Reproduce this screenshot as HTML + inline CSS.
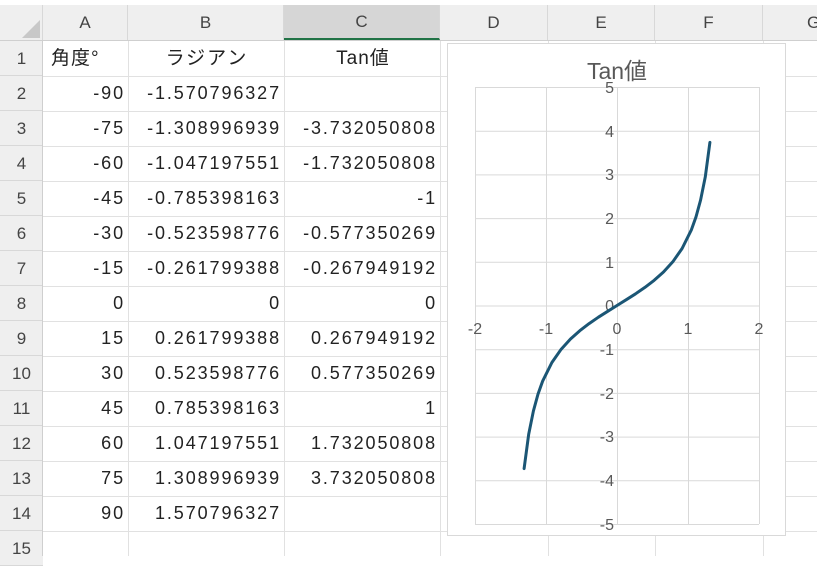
<!DOCTYPE html>
<html><head><meta charset="utf-8"><style>
body{margin:0;width:817px;height:556px;overflow:hidden;background:#fff;font-family:"Liberation Sans","Noto Sans CJK JP",sans-serif;position:relative}
.a{position:absolute}
.hd{position:absolute;top:5px;height:35px;background:#efefef;color:#444;font-size:17px;text-align:center;line-height:35px;border-right:1px solid #d8d8d8;box-sizing:border-box}
.rh{position:absolute;left:0;width:43px;background:#efefef;color:#444;font-size:17px;text-align:center;line-height:35px;height:35px;box-sizing:border-box;border-bottom:1px solid #d8d8d8}
.c{position:absolute;height:35px;line-height:35px;font-size:18px;color:#222;box-sizing:border-box;padding:0 3px 0 5px;white-space:nowrap;letter-spacing:1.9px}
</style></head><body>
<div class="hd" style="left:0;width:43px"></div>
<svg class="a" style="left:22px;top:20px" width="20" height="20"><polygon points="18,0 18,18 0,18" fill="#c8c8c8"/></svg>
<div class="hd" style="left:43px;width:85px">A</div>
<div class="hd" style="left:128px;width:156px">B</div>
<div class="hd" style="left:284px;width:156px;background:#d6d6d6;border-bottom:2px solid #217346;line-height:33px">C</div>
<div class="hd" style="left:440px;width:108px">D</div>
<div class="hd" style="left:548px;width:107px">E</div>
<div class="hd" style="left:655px;width:108px">F</div>
<div class="hd" style="left:763px;width:60px;text-align:left;padding-left:44px">G</div>
<div class="a" style="left:0;top:40px;width:817px;height:1px;background:#cfcfcf"></div>
<svg class="a" style="left:0;top:0" width="817" height="556">
<g stroke="#e1e1e1" stroke-width="1">
<line x1="43" y1="76.5" x2="817" y2="76.5"/><line x1="43" y1="111.5" x2="817" y2="111.5"/><line x1="43" y1="146.5" x2="817" y2="146.5"/><line x1="43" y1="181.5" x2="817" y2="181.5"/><line x1="43" y1="216.5" x2="817" y2="216.5"/><line x1="43" y1="251.5" x2="817" y2="251.5"/><line x1="43" y1="286.5" x2="817" y2="286.5"/><line x1="43" y1="321.5" x2="817" y2="321.5"/><line x1="43" y1="356.5" x2="817" y2="356.5"/><line x1="43" y1="391.5" x2="817" y2="391.5"/><line x1="43" y1="426.5" x2="817" y2="426.5"/><line x1="43" y1="461.5" x2="817" y2="461.5"/><line x1="43" y1="496.5" x2="817" y2="496.5"/><line x1="43" y1="531.5" x2="817" y2="531.5"/>
<line x1="128.5" y1="41" x2="128.5" y2="556"/><line x1="284.5" y1="41" x2="284.5" y2="556"/><line x1="440.5" y1="41" x2="440.5" y2="556"/><line x1="548.5" y1="41" x2="548.5" y2="556"/><line x1="655.5" y1="41" x2="655.5" y2="556"/><line x1="763.5" y1="41" x2="763.5" y2="556"/>
</g></svg>
<div class="rh" style="top:41px">1</div><div class="rh" style="top:76px">2</div><div class="rh" style="top:111px">3</div><div class="rh" style="top:146px">4</div><div class="rh" style="top:181px">5</div><div class="rh" style="top:216px">6</div><div class="rh" style="top:251px">7</div><div class="rh" style="top:286px">8</div><div class="rh" style="top:321px">9</div><div class="rh" style="top:356px">10</div><div class="rh" style="top:391px">11</div><div class="rh" style="top:426px">12</div><div class="rh" style="top:461px">13</div><div class="rh" style="top:496px">14</div><div class="rh" style="top:531px">15</div>
<div class="a" style="left:42px;top:41px;width:1px;height:515px;background:#cfcfcf"></div>
<div class="c" style="left:46px;top:41px;width:85px;font-size:19px;letter-spacing:1px">角度°</div>
<div class="c" style="left:128px;top:41px;width:156px;text-align:center;font-size:19px;letter-spacing:2px">ラジアン</div>
<div class="c" style="left:284px;top:41px;width:156px;text-align:center;font-size:19px;letter-spacing:1px">Tan値</div>
<div class="a" style="left:43px;top:76px">
<div class="c" style="left:0;top:0;width:85px;text-align:right">-90</div><div class="c" style="left:85px;top:0;width:156px;text-align:right">-1.570796327</div>
<div class="c" style="left:0;top:35px;width:85px;text-align:right">-75</div><div class="c" style="left:85px;top:35px;width:156px;text-align:right">-1.308996939</div><div class="c" style="left:241px;top:35px;width:156px;text-align:right">-3.732050808</div>
<div class="c" style="left:0;top:70px;width:85px;text-align:right">-60</div><div class="c" style="left:85px;top:70px;width:156px;text-align:right">-1.047197551</div><div class="c" style="left:241px;top:70px;width:156px;text-align:right">-1.732050808</div>
<div class="c" style="left:0;top:105px;width:85px;text-align:right">-45</div><div class="c" style="left:85px;top:105px;width:156px;text-align:right">-0.785398163</div><div class="c" style="left:241px;top:105px;width:156px;text-align:right">-1</div>
<div class="c" style="left:0;top:140px;width:85px;text-align:right">-30</div><div class="c" style="left:85px;top:140px;width:156px;text-align:right">-0.523598776</div><div class="c" style="left:241px;top:140px;width:156px;text-align:right">-0.577350269</div>
<div class="c" style="left:0;top:175px;width:85px;text-align:right">-15</div><div class="c" style="left:85px;top:175px;width:156px;text-align:right">-0.261799388</div><div class="c" style="left:241px;top:175px;width:156px;text-align:right">-0.267949192</div>
<div class="c" style="left:0;top:210px;width:85px;text-align:right">0</div><div class="c" style="left:85px;top:210px;width:156px;text-align:right">0</div><div class="c" style="left:241px;top:210px;width:156px;text-align:right">0</div>
<div class="c" style="left:0;top:245px;width:85px;text-align:right">15</div><div class="c" style="left:85px;top:245px;width:156px;text-align:right">0.261799388</div><div class="c" style="left:241px;top:245px;width:156px;text-align:right">0.267949192</div>
<div class="c" style="left:0;top:280px;width:85px;text-align:right">30</div><div class="c" style="left:85px;top:280px;width:156px;text-align:right">0.523598776</div><div class="c" style="left:241px;top:280px;width:156px;text-align:right">0.577350269</div>
<div class="c" style="left:0;top:315px;width:85px;text-align:right">45</div><div class="c" style="left:85px;top:315px;width:156px;text-align:right">0.785398163</div><div class="c" style="left:241px;top:315px;width:156px;text-align:right">1</div>
<div class="c" style="left:0;top:350px;width:85px;text-align:right">60</div><div class="c" style="left:85px;top:350px;width:156px;text-align:right">1.047197551</div><div class="c" style="left:241px;top:350px;width:156px;text-align:right">1.732050808</div>
<div class="c" style="left:0;top:385px;width:85px;text-align:right">75</div><div class="c" style="left:85px;top:385px;width:156px;text-align:right">1.308996939</div><div class="c" style="left:241px;top:385px;width:156px;text-align:right">3.732050808</div>
<div class="c" style="left:0;top:420px;width:85px;text-align:right">90</div><div class="c" style="left:85px;top:420px;width:156px;text-align:right">1.570796327</div>
</div>
<svg class="a" style="left:0;top:0" width="817" height="556" font-family="Liberation Sans, sans-serif">
<rect x="447.5" y="43.5" width="338" height="492" fill="#fff" stroke="#d9d9d9"/>
<g stroke="#d9d9d9" stroke-width="1">
<line x1="475.5" y1="87" x2="475.5" y2="524"/><line x1="546.5" y1="87" x2="546.5" y2="524"/><line x1="617.5" y1="87" x2="617.5" y2="524"/><line x1="688.5" y1="87" x2="688.5" y2="524"/><line x1="759.5" y1="87" x2="759.5" y2="524"/>
<line x1="475" y1="87.5" x2="759" y2="87.5"/><line x1="475" y1="131.2" x2="759" y2="131.2"/><line x1="475" y1="174.9" x2="759" y2="174.9"/><line x1="475" y1="218.6" x2="759" y2="218.6"/><line x1="475" y1="262.3" x2="759" y2="262.3"/><line x1="475" y1="306" x2="759" y2="306"/><line x1="475" y1="349.7" x2="759" y2="349.7"/><line x1="475" y1="393.4" x2="759" y2="393.4"/><line x1="475" y1="437.1" x2="759" y2="437.1"/><line x1="475" y1="480.8" x2="759" y2="480.8"/><line x1="475" y1="524.5" x2="759" y2="524.5"/>
</g>
<text x="617" y="79" font-size="23" fill="#595959" text-anchor="middle" font-family="Liberation Sans, Noto Sans CJK JP, sans-serif">Tan値</text>
<g font-size="16" fill="#595959" text-anchor="end">
<text x="614" y="93">5</text><text x="614" y="137">4</text><text x="614" y="180">3</text><text x="614" y="224">2</text><text x="614" y="268">1</text><text x="614" y="311">0</text><text x="614" y="355">-1</text><text x="614" y="399">-2</text><text x="614" y="442">-3</text><text x="614" y="486">-4</text><text x="614" y="530">-5</text>
</g>
<g font-size="16" fill="#595959" text-anchor="middle">
<text x="475" y="334">-2</text><text x="546" y="334">-1</text><text x="617" y="334">0</text><text x="688" y="334">1</text><text x="759" y="334">2</text>
</g>
<polyline points="524.1,468.6 528.7,434.2 533.4,411.0 538.0,394.1 542.6,381.2 551.9,362.5 561.2,349.2 570.5,339.0 579.8,330.7 589.1,323.6 598.4,317.2 607.7,311.3 617,305.5 626.3,299.7 635.6,293.8 644.9,287.4 654.2,280.3 663.5,272.0 672.8,261.8 682.1,248.5 691.4,229.8 696.0,216.9 700.6,200.0 705.3,176.8 709.9,142.4" fill="none" stroke="#1b5675" stroke-width="3" stroke-linecap="round" stroke-linejoin="round"/>
</svg>
</body></html>
